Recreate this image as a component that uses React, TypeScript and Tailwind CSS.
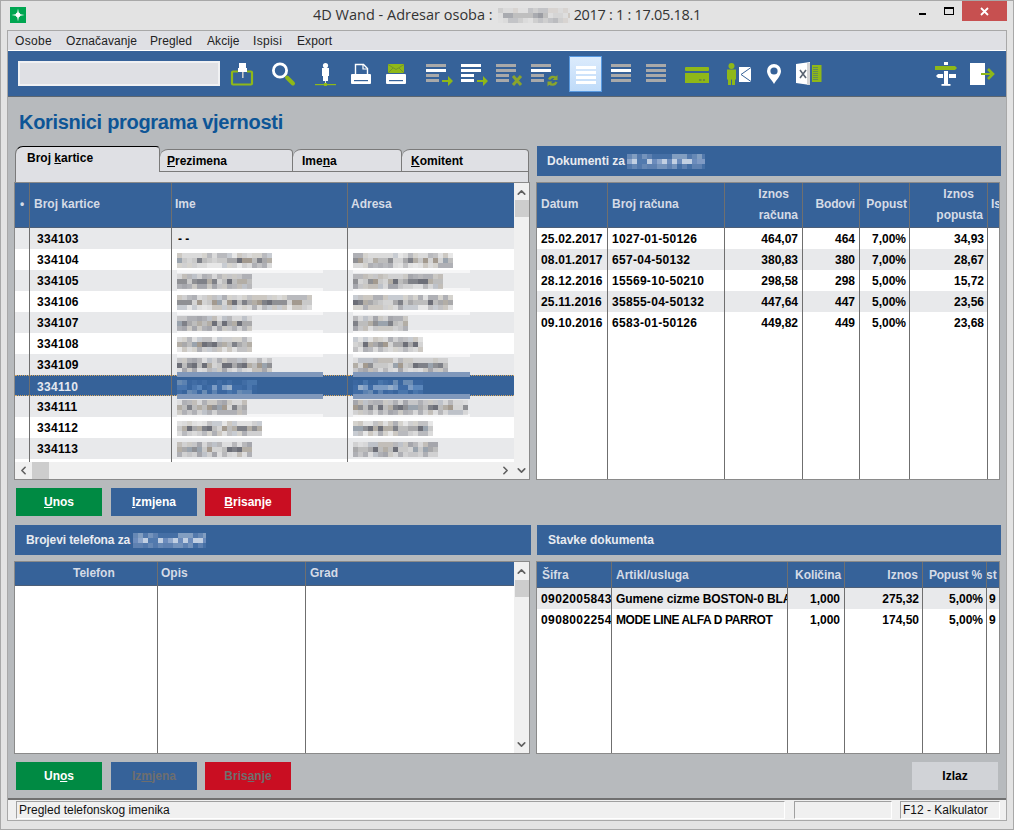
import type { ReactNode } from 'react';
import { ChevronUp, ChevronDown, ChevronLeft, ChevronRight } from 'lucide-react';

const GREEN = '#8fb818';
const OLIVE = '#8aa52c';
const GRAY = '#a9a9a9';

const PAL_ROW = ['#a9a9ab', '#8f9094', '#b3aea6', '#c9c9c9', '#7f8188', '#9aa3ad', '#bdbdbd', '#a39a8f', '#6d6f78', '#d4d4d4'];
const PAL_SEL = ['#3f6ca6', '#5a86bb', '#7c9cc4', '#4a76ae', '#96aeca', '#3a67a0'];
const PAL_HEAD = ['#8ea7cc', '#a7bcd9', '#c1cfe2', '#7f9ac4', '#6c8cbc', '#527aae'];
const PAL_TITLE = ['#d5d5d5', '#bfbfbf', '#cfc9c2', '#a9abb0', '#dedede', '#9b9da3'];

// pixelated name, the original is censored with a mosaic
function Mosaic({ w, seed, pal = PAL_ROW, rows = 3 }: { w: number; seed: number; pal?: string[]; rows?: number }) {
    let n = seed * 7919 + 13;
    const next = () => {
        n = (n * 1103515245 + 12345) & 0x7fffffff;
        return n >> 8;
    };
    const cells = [];
    for (let r = 0; r < rows; r++) {
        for (let c = 0; c < Math.ceil(w / 5); c++) {
            const color = pal[next() % pal.length];
            const edge = r === 0 || r === rows - 1;
            cells.push(<rect key={r + '-' + c} x={c * 5} y={r * 5} width={5} height={5} fill={color} opacity={edge ? 0.55 : 1} />);
        }
    }
    return (
        <svg width={w} height={rows * 5} className="block shrink-0">
            {cells}
        </svg>
    );
}

function Blur({ w, seed, sel, band, bandW }: { w: number; seed: number; sel?: boolean; band?: boolean; bandW: string }) {
    return (
        <div className="relative h-[21px]">
            {band ? (
                <>
                    <div className={(sel ? 'z-10 top-[-4px] h-[5px] bg-[#8098bb] ' : 'top-0 h-[3px] bg-[#f6f6f7] ') + 'absolute left-[5px] ' + bandW} />
                    <div className={(sel ? 'z-10 bottom-[-2px] h-[5px] bg-[#8098bb] ' : 'bottom-0 h-[3px] bg-[#f6f6f7] ') + 'absolute left-[5px] ' + bandW} />
                </>
            ) : null}
            <div className="absolute left-[5px] top-[4px]">
                <Mosaic w={w} seed={seed} pal={sel ? PAL_SEL : PAL_ROW} />
            </div>
        </div>
    );
}

type Col = { w: string; head: ReactNode; headCls: string; cellCls: string; cells: ReactNode[] };

function Table({ cols, headH, rowBg }: { cols: Col[]; headH: string; rowBg: (i: number) => string }) {
    return (
        <div className="flex flex-1 min-w-0 min-h-0 overflow-hidden bg-white">
            {cols.map((col, ci) => (
                <div key={ci} className={col.w + ' shrink-0 border-r border-[#6f6f6f] last:border-r-0 overflow-hidden'}>
                    <div className={headH + ' flex items-center bg-[#366299] border-b border-[#4d5f78] text-[#d5dbe6] leading-[21px] whitespace-nowrap ' + col.headCls}>{col.head}</div>
                    {col.cells.map((cell, i) => (
                        <div key={i} className={'h-[21px] leading-[23px] whitespace-nowrap ' + rowBg(i) + ' ' + col.cellCls}>
                            {cell}
                        </div>
                    ))}
                </div>
            ))}
        </div>
    );
}

function VScroll({ thumb }: { thumb: string }) {
    return (
        <div className="w-[15px] shrink-0 bg-[#f0f0f0] flex flex-col items-center text-[#606060]">
            <ChevronUp size={13} strokeWidth={3} className="mt-[3px]" />
            <div className={thumb + ' w-[14px] h-[17px] bg-[#cdcdcd]'} />
            <ChevronDown size={13} strokeWidth={3} className="mt-auto mb-[2px]" />
        </div>
    );
}

function Heading({ children }: { children: ReactNode }) {
    return <div className="h-[30px] bg-[#366299] flex items-center text-[#e9ebf0]">{children}</div>;
}

function Btn({ cls, children }: { cls: string; children: ReactNode }) {
    return <button className={'w-[86px] h-[28px] flex items-center justify-center ' + cls}>{children}</button>;
}

function Tab({ cls, children }: { cls: string; children: ReactNode }) {
    return <div className={'bg-[#dfe0e4] border border-[#7a7a7a] rounded-tl-[8px] rounded-tr-[4px] ' + cls}>{children}</div>;
}

function Ico({ x, w, cls, children }: { x: number; w: number; cls: string; children: ReactNode }) {
    return (
        <svg width={w} height={45} viewBox={`${x} 51 ${w} 45`} className={'block shrink-0 ' + cls}>
            {children}
        </svg>
    );
}

function ListBars({ x, c, short }: { x: number; c: string[]; short?: boolean }) {
    const ys = [64, 69, 74, 79];
    return (
        <>
            {ys.map((y, i) => (
                <rect key={y} x={x} y={y} width={short && i > 1 ? 13 : 20} height={3} fill={c[i]} />
            ))}
        </>
    );
}

function Arrow({ x }: { x: number }) {
    return <path d={`M${x} 80h6v-4l5 5-5 5v-4h-6z`} fill={GREEN} />;
}

function Toolbar() {
    return (
        <div className="h-[46px] shrink-0 bg-[#366299] border-b border-[#5c6670] flex items-start">
            <div className="ml-[10px] mt-[10px] w-[202px] h-[25px] bg-[#dfe0e4] border-2 border-[#f0f1f3]" />
            <Ico x={230} w={25} cls="ml-[10px]">
                <path d="M238 71.500h-5a1 1 0 0 0-1 1v11a1 1 0 0 0 1 1h18a1 1 0 0 0 1-1v-11a1 1 0 0 0-1-1h-4" fill="none" stroke={GREEN} strokeWidth={2.2} />
                <rect x={239} y={63} width={7} height={5} fill="#fff" />
                <rect x={238} y={68} width={9} height={4} fill="#fff" />
                <rect x={242} y={72} width={1.6} height={6} fill="#c9c9c9" />
            </Ico>
            <Ico x={270} w={26} cls="ml-[15px]">
                <circle cx={280} cy={70.5} r={6.6} fill="none" stroke="#fff" strokeWidth={2.8} />
                <path d="M287 77.500l6 6" stroke={GREEN} strokeWidth={4} strokeLinecap="round" />
            </Ico>
            <Ico x={314} w={24} cls="ml-[18px]">
                <circle cx={325.5} cy={65.5} r={2.6} fill="#fff" />
                <rect x={322} y={68} width={7} height={8} fill="#fff" />
                <rect x={323} y={76} width={5} height={5} fill="#fff" />
                <rect x={325} y={81} width={1} height={3} fill="#ddd" />
                <rect x={315} y={84} width={21} height={1.2} fill={GREEN} />
                <rect x={324} y={83} width={3} height={3} fill={GREEN} />
            </Ico>
            <Ico x={350} w={22} cls="ml-[12px]">
                <path d="M355.500 74.500v-10h8l4 4v6" fill="none" stroke="#fff" strokeWidth={1.4} />
                <path d="M363 64.500v4.500h4.500" fill="none" stroke="#fff" strokeWidth={1.2} />
                <path d="M352 74h18a1 1 0 0 1 1 1v8a1 1 0 0 1-1 1h-18a1 1 0 0 1-1-1v-8a1 1 0 0 1 1-1z" fill="#fff" />
                <rect x={354} y={80} width={14} height={1.2} fill="#366299" />
            </Ico>
            <Ico x={385} w={22} cls="ml-[13px]">
                <rect x={388} y={64} width={16} height={9} fill={GREEN} />
                <path d="M388 64.500l8 5 8-5M388 73l5-5M404 73l-5-5" fill="none" stroke="#6f8f30" strokeWidth={0.9} />
                <path d="M387 74h18a1 1 0 0 1 1 1v8a1 1 0 0 1-1 1h-18a1 1 0 0 1-1-1v-8a1 1 0 0 1 1-1z" fill="#fff" />
                <rect x={389} y={80} width={14} height={1.2} fill="#366299" />
            </Ico>
            <Ico x={425} w={28} cls="ml-[18px]">
                <ListBars x={426} c={[GRAY, '#fff', GRAY, GRAY]} short />
                <Arrow x={442} />
            </Ico>
            <Ico x={460} w={28} cls="ml-[7px]">
                <ListBars x={461} c={['#fff', '#fff', '#fff', '#fff']} short />
                <Arrow x={477} />
            </Ico>
            <Ico x={495} w={28} cls="ml-[7px]">
                <ListBars x={496} c={[GRAY, GRAY, GRAY, GRAY]} short />
                <path d="M513 76l8 9M521 76l-8 9" stroke={OLIVE} strokeWidth={3} />
            </Ico>
            <Ico x={530} w={29} cls="ml-[7px]">
                <ListBars x={531} c={[GRAY, '#fff', GRAY, GRAY]} short />
                <path d="M549 79.500a4.500 4.500 0 0 1 7-1.500" fill="none" stroke={OLIVE} strokeWidth={2.4} />
                <path d="M557.500 75v5h-5z" fill={OLIVE} />
                <path d="M556.500 82a4.500 4.500 0 0 1-7 1.500" fill="none" stroke={OLIVE} strokeWidth={2.4} />
                <path d="M547.500 86.500v-5h5z" fill={OLIVE} />
            </Ico>
            <div className="ml-[10px] mt-[5px] w-[33px] h-[36px] border border-[#5a9ae0] bg-gradient-to-b from-[#dcebfc] to-[#bfdbf9] flex flex-col items-center gap-[2px] pt-[9px]">
                <div className="w-[20px] h-[3px] bg-white" />
                <div className="w-[20px] h-[3px] bg-white" />
                <div className="w-[20px] h-[3px] bg-white" />
                <div className="w-[20px] h-[3px] bg-white" />
            </div>
            <Ico x={611} w={20} cls="ml-[9px]">
                <ListBars x={611} c={[GRAY, '#fff', GRAY, GRAY]} />
            </Ico>
            <Ico x={646} w={20} cls="ml-[15px]">
                <ListBars x={646} c={[GRAY, GRAY, GRAY, GRAY]} />
            </Ico>
            <Ico x={685} w={24} cls="ml-[19px]">
                <rect x={685} y={67} width={24} height={4} rx={1} fill={GREEN} />
                <rect x={685} y={73} width={24} height={10} fill={GREEN} />
                <rect x={699} y={79} width={2.5} height={2} fill="#6f8a3c" />
                <rect x={703} y={79} width={2} height={2} fill="#6f8a3c" />
            </Ico>
            <Ico x={727} w={25} cls="ml-[18px]">
                <circle cx={731.5} cy={66} r={3} fill={GREEN} />
                <rect x={727} y={69.5} width={9} height={10} fill={GREEN} />
                <rect x={728} y={79} width={3} height={6} fill={GREEN} />
                <rect x={732} y={79} width={3} height={6} fill={GREEN} />
                <rect x={739} y={67} width={12} height={15} fill="#fff" />
                <path d="M751 67.500l-10 7 10 7" fill="none" stroke="#366299" strokeWidth={1} />
            </Ico>
            <Ico x={766} w={16} cls="ml-[14px]">
                <path d="M774 84c-2-4-7-8-7-13a7 7 0 0 1 14 0c0 5-5 9-7 13z" fill="#fff" />
                <circle cx={774} cy={71} r={3.6} fill="#366299" />
            </Ico>
            <Ico x={796} w={26} cls="ml-[14px]">
                <path d="M796 64l14-2v23l-14-2z" fill="#fff" />
                <rect x={807} y={63} width={3} height={22} fill="#d5d5d5" />
                <path d="M800 70l6 8M806 70l-6 8" stroke="#5a6472" strokeWidth={1.6} />
                <rect x={812} y={65} width={9.5} height={17} fill={GREEN} />
                <path d="M813 67.500h5M813 69.500h5M813 71.500h5M813 73.500h5M813 75.500h5M813 77.500h5M813 79.500h5" stroke="#366299" strokeWidth={0.7} opacity={0.7} />
            </Ico>
            <Ico x={934} w={24} cls="ml-[112px]">
                <rect x={944} y={62} width={4} height={3} fill="#fff" />
                <path d="M935 66h20l2 2-2 2h-20z" fill={GREEN} />
                <rect x={944} y={71} width={4} height={13} fill="#fff" />
                <path d="M943 74v4h-5l-2-2 2-2z" fill="#fff" />
                <path d="M949 74v4h7v-4z" fill="#fff" />
                <rect x={941.5} y={84} width={9} height={1.8} fill="#fff" />
            </Ico>
            <Ico x={970} w={26} cls="ml-[12px]">
                <rect x={970} y={63} width={15} height={22} fill="#fff" />
                <rect x={981} y={73} width={10} height={2} fill={GREEN} />
                <path d="M988 69l5 5-5 5" fill="none" stroke={GREEN} strokeWidth={2.6} />
            </Ico>
        </div>
    );
}

const names = [95, 75, 135, 75, 75, 95, 80, 70, 85, 75];
const addrs = [100, 90, 100, 55, 70, 95, 70, 115, 80, 85];
const hasBand = (i: number) => i === 6 || ((i + 1) % 2 === 0 && i < 9);

const mainCols: Col[] = [
    {
        w: 'w-[15px]',
        head: '•',
        headCls: 'pl-[5px] pb-[2px]',
        cellCls: '',
        cells: Array.from({ length: 11 }, () => null),
    },
    {
        w: 'w-[142px]',
        head: 'Broj kartice',
        headCls: 'pl-[4px] pb-[2px]',
        cellCls: 'pl-[7px] tracking-[0.3px]',
        cells: ['334103', '334104', '334105', '334106', '334107', '334108', '334109', '334110', '334111', '334112', '334113'],
    },
    {
        w: 'w-[176px]',
        head: 'Ime',
        headCls: 'pl-[3px] pb-[2px]',
        cellCls: 'overflow-visible',
        cells: [
            <span className="pl-[6px]">- -</span>,
            ...names.map((w, i) => <Blur w={w} seed={i + 1} sel={i === 6} band={hasBand(i)} bandW="w-[146px]" />),
        ],
    },
    {
        w: 'w-[166px]',
        head: 'Adresa',
        headCls: 'pl-[3px] pb-[2px]',
        cellCls: 'overflow-visible',
        cells: [
            null,
            ...addrs.map((w, i) => <Blur w={w} seed={i + 40} sel={i === 6} band={hasBand(i)} bandW="w-[117px]" />),
        ],
    },
];

const docCols: Col[] = [
    { w: 'w-[71px]', head: 'Datum', headCls: 'pl-[4px] pb-[2px]', cellCls: 'pl-[4px] tracking-[0.15px]', cells: ['25.02.2017', '08.01.2017', '28.12.2016', '25.11.2016', '09.10.2016'] },
    { w: 'w-[117px]', head: 'Broj računa', headCls: 'pl-[4px] pb-[2px]', cellCls: 'pl-[4px] tracking-[0.3px]', cells: ['1027-01-50126', '657-04-50132', '15569-10-50210', '35855-04-50132', '6583-01-50126'] },
    {
        w: 'w-[78px]',
        head: (
            <div className="w-full text-right pr-[4px]">
                <div className="pr-[9px]">Iznos</div>
                <div>računa</div>
            </div>
        ),
        headCls: '',
        cellCls: 'text-right pr-[4px]',
        cells: ['464,07', '380,83', '298,58', '447,64', '449,82'],
    },
    { w: 'w-[57px]', head: <div className="w-full text-right pr-[4px] tracking-[-0.2px]">Bodovi</div>, headCls: 'pb-[2px]', cellCls: 'text-right pr-[4px]', cells: ['464', '380', '298', '447', '449'] },
    { w: 'w-[50px]', head: <div className="w-full text-right pr-[2px]">Popust</div>, headCls: 'pb-[2px]', cellCls: 'text-right pr-[3px]', cells: ['7,00%', '7,00%', '5,00%', '5,00%', '5,00%'] },
    {
        w: 'w-[78px]',
        head: (
            <div className="w-full text-right pr-[4px]">
                <div className="pr-[9px]">Iznos</div>
                <div>popusta</div>
            </div>
        ),
        headCls: '',
        cellCls: 'text-right pr-[3px]',
        cells: ['34,93', '28,67', '15,72', '23,56', '23,68'],
    },
    { w: 'w-[11px]', head: 'Is', headCls: 'pl-[3px] pb-[2px]', cellCls: '', cells: [] },
];

const itemCols: Col[] = [
    { w: 'w-[75px]', head: 'Šifra', headCls: 'pl-[5px] pt-[1px]', cellCls: 'pl-[4px] tracking-[0.4px]', cells: ['0902005843', '0908002254'] },
    {
        w: 'w-[176px]',
        head: 'Artikl/usluga',
        headCls: 'pl-[4px] pt-[1px]',
        cellCls: 'pl-[4px]',
        cells: [<span className="tracking-[-0.1px]">Gumene cizme BOSTON-0 BLACK</span>, <span className="tracking-[-0.4px]">MODE LINE ALFA D PARROT</span>],
    },
    { w: 'w-[57px]', head: <div className="w-full text-right pr-[3px] pt-[1px] tracking-[-0.1px]">Količina</div>, headCls: '', cellCls: 'text-right pr-[4px]', cells: ['1,000', '1,000'] },
    { w: 'w-[78px]', head: <div className="w-full text-right pr-[4px] pt-[1px]">Iznos</div>, headCls: '', cellCls: 'text-right pr-[3px]', cells: ['275,32', '174,50'] },
    { w: 'w-[64px]', head: <div className="w-full text-right pr-[4px] pt-[1px] tracking-[-0.2px]">Popust %</div>, headCls: '', cellCls: 'text-right pr-[3px]', cells: ['5,00%', '5,00%'] },
    { w: 'w-[12px]', head: <span className="-ml-[1px] pt-[1px]">st</span>, headCls: '', cellCls: 'pl-[2px]', cells: ['9', '9'] },
];

const phoneCols: Col[] = [
    { w: 'w-[143px]', head: 'Telefon', headCls: 'pl-[58px]', cellCls: '', cells: [] },
    { w: 'w-[148px]', head: 'Opis', headCls: 'pl-[3px]', cellCls: '', cells: [] },
    { w: 'w-[208px]', head: 'Grad', headCls: 'pl-[4px]', cellCls: '', cells: [] },
];

export default function App() {
    return (
        <div className="w-[1014px] h-[830px] flex flex-col bg-[#e3e3e3] border border-[#a8a8a8] font-['Liberation_Sans',sans-serif] text-[12px] font-bold text-black overflow-hidden">
            {/* title bar */}
            <div className="h-[29px] shrink-0 flex items-start font-normal text-[#333]">
                <svg width={16} height={16} viewBox="0 0 16 16" className="ml-[9px] mt-[6px] shrink-0">
                    <rect width={16} height={16} fill="#00a651" />
                    <path d="M8 1.500l1 5.500 5.500 1-5.500 1-1 5.500-1-5.500L1.500 8l5.500-1z" fill="#fff" />
                    <circle cx={8} cy={8} r={2.4} fill="#fff" />
                </svg>
                <div className="ml-[287px] h-[28px] flex items-center text-[14.5px] whitespace-nowrap font-['Open_Sans',sans-serif]">
                    <span>4D Wand - Adresar osoba :</span>
                    <div className="ml-[5px] w-[72px] overflow-hidden">
                        <Mosaic w={72} seed={77} pal={PAL_TITLE} />
                    </div>
                    <span className="ml-[4px] tracking-[-0.3px]">2017 : 1 : 17.05.18.1</span>
                </div>
                <div className="ml-auto flex items-start mr-[6px]">
                    <div className="mt-[12px] w-[7px] h-[2px] bg-black" />
                    <div className="ml-[18px] mt-[6px] w-[10px] h-[8px] border border-black border-t-2" />
                    <div className="ml-[8px] w-[45px] h-[20px] bg-[#c75050] flex items-center justify-center">
                        <svg width={9} height={9} viewBox="0 0 9 9">
                            <path d="M1 1l7 7M8 1l-7 7" stroke="#fff" strokeWidth={1.8} />
                        </svg>
                    </div>
                </div>
            </div>

            {/* client area */}
            <div className="flex-1 mx-[6px] mb-[8px] flex flex-col min-h-0 border border-[#a8a8a8]">
                <div className="h-[19px] shrink-0 bg-[#dfe0e4] flex items-center pl-[7px] font-normal tracking-[0.1px] text-[#222]">
                    <span className="w-[51px] tracking-[0.35px]">Osobe</span>
                    <span className="w-[84px]">Označavanje</span>
                    <span className="w-[57px]">Pregled</span>
                    <span className="w-[46px]">Akcije</span>
                    <span className="w-[44px] tracking-[0.3px]">Ispisi</span>
                    <span>Export</span>
                </div>
                <div className="h-px shrink-0 bg-white" />
                <Toolbar />

                <div className="flex-1 min-h-0 bg-[#b7babd] pl-[7px] flex flex-col">
                    <div className="h-[49px] shrink-0 flex items-center pl-[4px] text-[20px] tracking-[-0.3px] text-[#0d5596]">Korisnici programa vjernosti</div>

                    <div className="flex gap-[6px] h-[334px] shrink-0">
                        <div className="w-[516px] shrink-0 flex flex-col">
                            <div className="flex h-[26px] shrink-0 items-end w-[514px] relative z-10 -mb-px">
                                <Tab cls="w-[145px] h-[26px] border-t-black border-b-0 pl-[11px] pt-[2px]">
                                    Broj <u>k</u>artice
                                </Tab>
                                <Tab cls="w-[133px] h-[23px] pl-[7px] pt-[2px] border-l-0">
                                    <u>P</u>rezimena
                                </Tab>
                                <Tab cls="w-[109px] h-[23px] pl-[9px] pt-[2px] border-l-0">
                                    Ime<u>n</u>a
                                </Tab>
                                <Tab cls="w-[127px] h-[23px] pl-[9px] pt-[2px] border-l-0">
                                    <u>K</u>omitent
                                </Tab>
                            </div>
                            <div className="h-[11px] w-[514px] shrink-0 bg-[#dfe0e4] border-x border-[#7a7a7a]" />
                            <div className="h-[298px] w-[516px] -ml-px border border-[#8a8a8a] flex bg-white">
                                <div className="w-[499px] shrink-0 flex flex-col">
                                    <Table
                                        cols={mainCols}
                                        headH="h-[45px]"
                                        rowBg={(i) => (i === 7 ? 'bg-[#366299] text-[#e4e8f0] border-y border-dotted border-[#d8a860]' : i % 2 === 0 ? 'bg-[#e8e9eb]' : 'bg-white')}
                                    />
                                    <div className="h-[17px] shrink-0 bg-[#f0f0f0] flex items-center text-[#606060] pl-[2px] pr-[2px]">
                                        <ChevronLeft size={13} strokeWidth={3} />
                                        <div className="ml-[2px] w-[17px] h-[17px] bg-[#cdcdcd]" />
                                        <ChevronRight size={13} strokeWidth={3} className="ml-auto" />
                                    </div>
                                </div>
                                <VScroll thumb="mt-[1px]" />
                            </div>
                        </div>

                        <div className="w-[464px] shrink-0 flex flex-col">
                            <Heading>
                                <span className="ml-[10px]">Dokumenti za</span>
                                <div className="ml-[2px]">
                                    <Mosaic w={78} seed={5} pal={PAL_HEAD} />
                                </div>
                            </Heading>
                            <div className="mt-[6px] h-[298px] w-[464px] -ml-px border border-[#8a8a8a] flex bg-white">
                                <Table cols={docCols} headH="h-[45px]" rowBg={(i) => (i % 2 === 1 ? 'bg-[#e8e9eb]' : 'bg-white')} />
                            </div>
                        </div>
                    </div>

                    <div className="mt-[8px] flex shrink-0 pl-px text-white">
                        <Btn cls="bg-[#008a43]"><span><u>U</u>nos</span></Btn>
                        <Btn cls="ml-[9px] bg-[#366299]"><span><u>I</u>zmjena</span></Btn>
                        <Btn cls="ml-[8px] bg-[#c90e22]"><span><u>B</u>risanje</span></Btn>
                    </div>

                    <div className="mt-[9px] flex gap-[6px] h-[229px] shrink-0">
                        <div className="w-[516px] shrink-0 flex flex-col">
                            <Heading>
                                <span className="ml-[11px] tracking-[-0.1px]">Brojevi telefona za</span>
                                <div className="ml-[3px]">
                                    <Mosaic w={73} seed={5} pal={PAL_HEAD} />
                                </div>
                            </Heading>
                            <div className="mt-[6px] h-[193px] w-[516px] -ml-px border border-[#8a8a8a] flex bg-white">
                                <div className="w-[499px] shrink-0 flex">
                                    <Table cols={phoneCols} headH="h-[24px]" rowBg={() => 'bg-white'} />
                                </div>
                                <VScroll thumb="mt-[2px]" />
                            </div>
                        </div>
                        <div className="w-[464px] shrink-0 flex flex-col">
                            <Heading>
                                <span className="ml-[11px]">Stavke dokumenta</span>
                            </Heading>
                            <div className="mt-[6px] h-[193px] w-[464px] -ml-px border border-[#8a8a8a] flex bg-white">
                                <Table cols={itemCols} headH="h-[26px]" rowBg={(i) => (i === 0 ? 'bg-[#e8e9eb]' : 'bg-white')} />
                            </div>
                        </div>
                    </div>

                    <div className="mt-[8px] flex shrink-0 pl-px pr-[8px] text-[#6e6e6e]">
                        <Btn cls="bg-[#008a43] text-white"><span>Un<u>o</u>s</span></Btn>
                        <Btn cls="ml-[9px] bg-[#366299]"><span>Iz<u>m</u>jena</span></Btn>
                        <Btn cls="ml-[8px] bg-[#c90e22]"><span>Bris<u>a</u>nje</span></Btn>
                        <Btn cls="ml-auto bg-[#d1d3d7] text-black">Izlaz</Btn>
                    </div>
                    <div className="flex-1" />
                </div>

                {/* status bar */}
                <div className="h-[22px] shrink-0 bg-[#f0f0f0] border-t-2 border-[#707070] flex items-start pt-px font-normal text-[#111]">
                    <div className="ml-[8px] w-[769px] h-[18px] pl-[2px] leading-[17px] border-t border-l border-[#a0a0a0] border-b border-r border-b-white border-r-white">Pregled telefonskog imenika</div>
                    <div className="ml-[9px] w-[98px] h-[18px] border-t border-l border-[#a0a0a0] border-b border-r border-b-white border-r-white" />
                    <div className="ml-[8px] w-[100px] h-[18px] pl-[2px] leading-[17px] border-t border-l border-[#a0a0a0] border-b border-r border-b-white border-r-white">F12 - Kalkulator</div>
                </div>
            </div>
        </div>
    );
}
